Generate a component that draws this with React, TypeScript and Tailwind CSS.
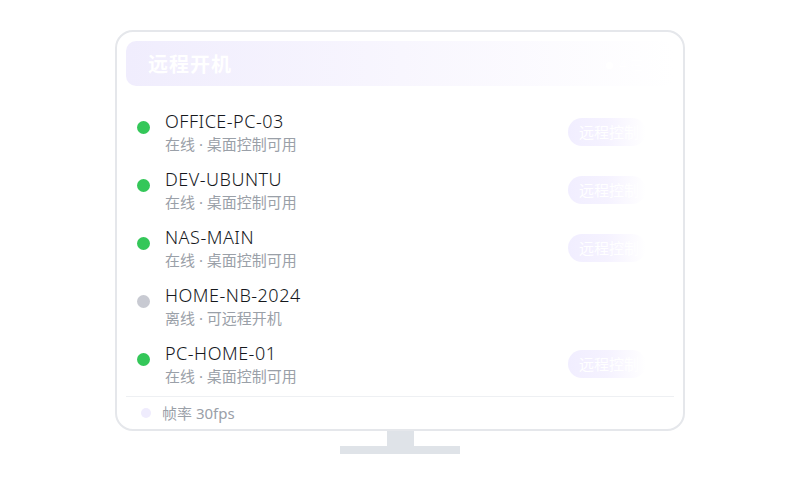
const devices = [
  { name: 'OFFICE-PC-03', online: true },
  { name: 'DEV-UBUNTU', online: true },
  { name: 'NAS-MAIN', online: true },
  { name: 'HOME-NB-2024', online: false },
  { name: 'PC-HOME-01', online: true },
]

const font = { fontFamily: '"Noto Sans", "Noto Sans CJK SC", sans-serif' }

function DeviceRow({ name, online }: { name: string; online: boolean }) {
  return (
    <div className="flex h-[58px] items-center justify-between pl-[11px] pr-[28px]">
      <div className="flex items-start gap-[15px]">
        <span
          className={`mt-[12px] h-[13px] w-[13px] shrink-0 rounded-full ${online ? 'bg-[#34c759]' : 'bg-[#c8cad2]'}`}
        />
        <div className="flex flex-col">
          <span className="text-[18px] font-light leading-[24px] tracking-[0.5px] text-[#15181d]">{name}</span>
          <span className="text-[15px] leading-[22px] text-[#9aa0a8]">
            {online ? '在线 · 桌面控制可用' : '离线 · 可远程开机'}
          </span>
        </div>
      </div>
      {online && (
        <button className="h-[28px] w-[78px] rounded-full bg-gradient-to-r from-[#f1eeff] via-[#f5f2ff] to-white pl-[11px] text-left text-[15px] text-white">
          远程控制
        </button>
      )}
    </div>
  )
}

export default function App() {
  return (
    <div className="flex h-[500px] w-[800px] flex-col items-center bg-white pt-[30px]" style={font}>
      <div className="flex h-[401px] w-[570px] flex-col rounded-[18px] border-2 border-[#e5e7eb] p-[9px]">
        <div className="flex h-[45px] shrink-0 items-center justify-between rounded-[10px] bg-gradient-to-r from-[#f0edfd] via-[#f8f6fe] to-white pl-[22px] pr-[18px] pt-[3px]">
          <span className="text-[20px] font-bold tracking-[1px] text-white">远程开机</span>
          <div className="flex items-center gap-[6px] text-[13px] text-white">
            <span className="h-[7px] w-[7px] rounded-full bg-white" />
            <span>4 在线</span>
          </div>
        </div>
        <div className="mt-[17px] flex flex-col">
          {devices.map((d) => (
            <DeviceRow key={d.name} name={d.name} online={d.online} />
          ))}
        </div>
        <div className="mt-[3px] flex items-center gap-[11px] border-t border-[#eef0f3] pl-[15px] pt-[6px]">
          <span className="h-[10px] w-[10px] rounded-full bg-[#efecfd]" />
          <span className="text-[15px] leading-[20px] text-[#9aa0a8]">帧率 30fps</span>
        </div>
      </div>
      <div className="h-[15px] w-[27px] bg-[#dfe3e8]" />
      <div className="h-[8px] w-[120px] bg-[#dfe3e8]" />
    </div>
  )
}
